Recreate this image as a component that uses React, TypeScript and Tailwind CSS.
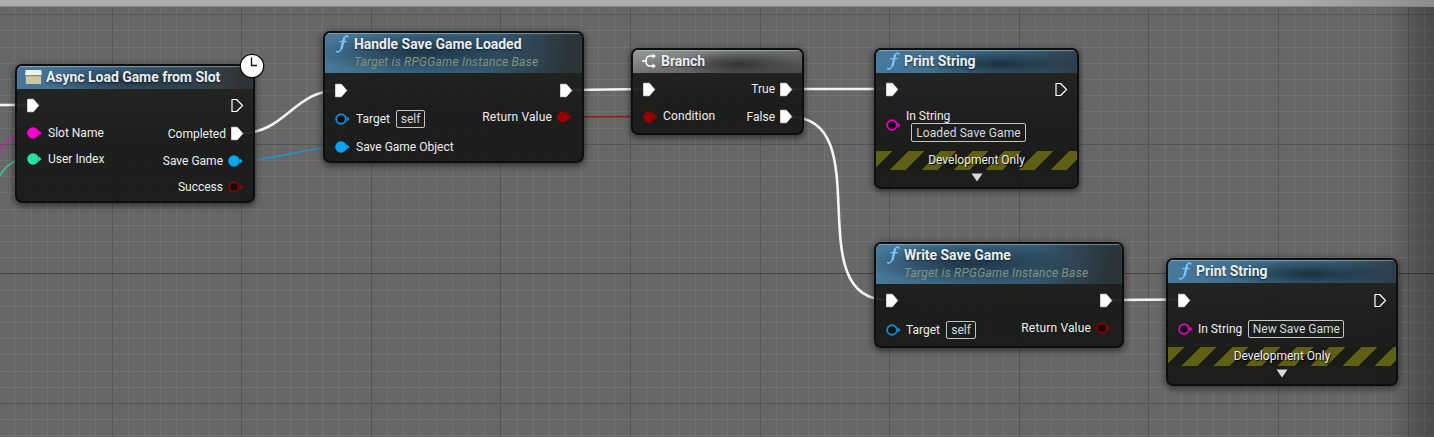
import type { ReactNode } from "react";

const XS = Array.from({ length: 90 }, (_, i) => i - 7);
const YS = Array.from({ length: 28 }, (_, i) => i - 17);

function Grid() {
  return (
    <svg className="absolute inset-0" width="1434" height="437" shapeRendering="crispEdges">
      {XS.filter((k) => k % 8 !== 0).map((k) => (
        <rect key={k} x={Math.floor(112.01 + 16.2 * k)} y="8" width="1" height="429" fill="#727272" />
      ))}
      {YS.filter((k) => k % 8 !== 0).map((k) => (
        <rect key={k} x="0" y={Math.floor(273.81 + 16.2 * k)} width="1434" height="1" fill="#727272" />
      ))}
      {XS.filter((k) => k % 8 === 0).map((k) => (
        <rect key={k} x={Math.floor(112.01 + 16.2 * k)} y="8" width="1" height="429" fill="#555555" />
      ))}
      {YS.filter((k) => k % 8 === 0).map((k) => (
        <rect key={k} x="0" y={Math.floor(273.81 + 16.2 * k)} width="1434" height="1" fill={k === 0 ? "#424242" : "#555555"} />
      ))}
    </svg>
  );
}

function Wires() {
  return (
    <svg className="absolute inset-0" width="1434" height="437" fill="none">
      <g stroke="#f4f4f4" strokeWidth="2.6">
        <path d="M0 105H30" />
        <path d="M240 133.500C286 133.500 293 90 340 90" />
        <path d="M570 90L646 89" />
        <path d="M790 89H888" />
        <path d="M790 117C880 117 797 300 888 300" />
        <path d="M1108 300L1182 299.500" />
      </g>
      <path d="M-13 171C3 143 10 133 32 133" stroke="#c02aa8" strokeWidth="1.800" />
      <path d="M-9 190C5 165 10 159 32 159" stroke="#3bbf96" strokeWidth="1.800" />
      <path d="M238 160.500C278 160.500 300 148 340 147" stroke="#2a8fc9" strokeWidth="1.700" />
      <path d="M566 117L648 116.500" stroke="#8f1c1c" strokeWidth="1.700" />
    </svg>
  );
}

function Exec({ hollow }: { hollow?: boolean }) {
  return (
    <svg width="14" height="15" viewBox="0 0 14 15" className="shrink-0">
      {hollow ? (
        <path d="M2 1.500H6.600L12.500 7.500L6.600 13.500H2Z" fill="none" stroke="#fff" strokeWidth="1.200" strokeLinejoin="round" />
      ) : (
        <path d="M1.500 1.200H7.400L12.800 7.500L7.400 13.800H1.500Z" fill="#fff" stroke="#fff" strokeWidth=".6" strokeLinejoin="round" />
      )}
    </svg>
  );
}

function Dot({ color, hollow }: { color: string; hollow?: boolean }) {
  return (
    <svg width="18" height="14" viewBox="0 0 18 14" className="shrink-0">
      <path d="M12.600 4.200L15.700 7L12.600 9.800Z" fill={color} />
      <circle cx="7" cy="7" r={hollow ? 4.8 : 5.8} fill={hollow ? "#0c0d0d" : color} stroke={hollow ? color : "none"} strokeWidth="1.900" />
    </svg>
  );
}

function FnIcon() {
  return (
    <svg width="16" height="20" viewBox="0 0 16 20" className="shrink-0" fill="none" stroke="#79c3f5" strokeLinecap="round">
      <path d="M14 3C12.900 1.300 10.600 1.900 9.700 5.200L7.700 13.500C6.800 17 4.700 18.700 2.600 17.500" strokeWidth="1.500" />
      <path d="M10 4.500L7.700 14" strokeWidth="2.400" />
      <path d="M5.800 7.600H12.300" strokeWidth="1.300" />
    </svg>
  );
}

function BranchIcon() {
  return (
    <svg width="16" height="16" viewBox="0 0 16 16" className="-ml-px shrink-0" fill="none" stroke="#fff" strokeWidth="1.500">
      <path d="M1 8H5M12 3H9C6.300 3 5 5.500 5 8S6.300 13 9 13H12" />
      <path d="M11.500 .6L15 3L11.500 5.400ZM11.500 10.600L15 13L11.500 15.400Z" fill="#fff" stroke="none" />
    </svg>
  );
}

function BoxIcon() {
  return (
    <svg width="18" height="16" viewBox="0 0 18 16" className="-ml-px shrink-0">
      <path d="M.700 1H16.300L16.800 6H0Z" fill="#f2f0e6" />
      <path d="M.800 6.500H16V15H.800Z" fill="#cfc7a4" />
      <path d="M.800 6H16V7.300H.800Z" fill="#8c876f" />
    </svg>
  );
}

function Node({ place, children }: { place: string; children: ReactNode }) {
  return (
    <section className={`absolute flex flex-col overflow-hidden rounded-[7px] border-2 border-[#0d0e0e] bg-[linear-gradient(180deg,rgba(32,34,32,0.93),rgba(22,24,22,0.93)_60%,rgba(24,26,24,0.95))] shadow-[0_2px_6px_1px_rgba(0,0,0,0.5)] ${place}`}>
      {children}
    </section>
  );
}

function Header({ icon, title, subtitle, gray, wide }: { icon: ReactNode; title: string; subtitle?: string; gray?: boolean; wide?: boolean }) {
  const tone = gray
    ? "bg-[radial-gradient(ellipse_38%_60%_at_62%_62%,rgba(40,40,40,0.8),transparent),linear-gradient(170deg,#9a9a9a,#6e6e6e_50%,#464646_100%)]"
    : subtitle
      ? "bg-[radial-gradient(ellipse_45%_50%_at_38%_50%,rgba(20,36,48,0.7),transparent),linear-gradient(99deg,#487a9c,#3b6582_30%,#345770_65%,#2a3439_94%)]"
      : wide
        ? "bg-[radial-gradient(ellipse_40%_60%_at_50%_62%,rgba(24,36,46,0.7),transparent),linear-gradient(99deg,#487a9c,#3c6480_35%,#364c5a_70%,#303335_95%)]"
        : "bg-[radial-gradient(ellipse_38%_60%_at_62%_62%,rgba(18,36,48,0.8),transparent),linear-gradient(99deg,#487a9c,#3f6d8b_35%,#385f78_70%,#2d3f4b_98%)]";
  return (
    <header className={`flex shrink-0 items-start pl-[9px] shadow-[inset_0_1px_1px_rgba(190,215,230,0.5)] ${subtitle ? "h-10" : "h-[23px]"} ${tone}`}>
      <div className={`flex h-[22px] items-center ${wide ? "w-5" : "w-[19px]"}`}>{icon}</div>
      <div className="flex flex-col">
        <h2 className="h-[22px] whitespace-nowrap text-[14px] leading-[22px] font-bold tracking-[-0.04px] text-[#e8eef2] [text-shadow:0_1px_2px_rgba(0,0,0,0.6)]">{title}</h2>
        {subtitle && <p className="h-[14px] whitespace-nowrap text-[12px] leading-[14px] tracking-[0.24px] text-[#82937f] italic">{subtitle}</p>}
      </div>
    </header>
  );
}

function Row({ h, left, right }: { h: string; left?: ReactNode; right?: ReactNode }) {
  return (
    <div className={`flex shrink-0 items-center justify-between ${h}`}>
      <div className="flex items-center">{left}</div>
      <div className="flex items-center">{right}</div>
    </div>
  );
}

function Field({ text, className = "h-[18px]" }: { text: string; className?: string }) {
  return <span className={`flex items-center justify-center rounded-[2px] border border-[#c4c4c4] text-[#d8d8d8] ${className}`}>{text}</span>;
}

function DevOnly() {
  return (
    <div className="flex flex-col items-center">
      <div className="flex h-[19px] w-full items-center justify-center bg-[repeating-linear-gradient(135deg,#606015_0,#606015_11.400px,#1b1c18_11.400px,#1b1c18_22.800px)] pb-px [text-shadow:1px_1px_1px_#000]">Development Only</div>
      <svg width="12" height="9" viewBox="0 0 12 9" className="mt-[3px]">
        <path d="M.5.500H11.500L6 8.500Z" fill="#d8d8d8" />
      </svg>
    </div>
  );
}

export default function App() {
  return (
    <main className="relative h-[437px] w-[1434px] overflow-hidden bg-[#676767] font-[Roboto,sans-serif] text-[12px] leading-4 whitespace-nowrap text-[#ededed]">
      <Grid />
      <div className="absolute inset-0 shadow-[inset_-45px_0_30px_-20px_rgba(0,0,0,0.28)]" />
      <div className="absolute inset-x-0 top-0 h-[7px] border-b border-[#858585] bg-linear-to-r from-[#adadad] from-90% to-[#8d8d8d]" />
      <Wires />

      <Node place="left-[15px] top-[64px] h-[139px] w-[240px]">
        <Header wide icon={<BoxIcon />} title="Async Load Game from Slot" />
        <div className="flex justify-between">
          <div className="flex flex-col pt-[2px] pl-[9px]">
            <Row h="h-7" left={<Exec />} />
            <Row h="h-7" left={<><Dot color="#ff00d0" /><span className="pl-[4px]">Slot Name</span></>} />
            <Row h="h-6" left={<><Dot color="#21e0a8" /><span className="pl-[4px]">User Index</span></>} />
          </div>
          <div className="flex flex-col pt-[2px] pr-[8px]">
            <Row h="h-7 pr-px" right={<Exec hollow />} />
            <Row h="h-[29px] pr-px" right={<><span className="pr-[4px]">Completed</span><Exec /></>} />
            <Row h="h-[25px]" right={<><span className="pr-[4px]">Save Game</span><Dot color="#00a5f5" /></>} />
            <Row h="h-7" right={<><span className="pr-[4px]">Success</span><Dot color="#8b0000" hollow /></>} />
          </div>
        </div>
      </Node>
      <svg className="absolute left-[238px] top-[52px]" width="28" height="28" viewBox="0 0 28 28">
        <circle cx="14" cy="14" r="11.700" fill="#fff" stroke="#111" strokeWidth="1.300" />
        <path d="M13.500 5.500V13.500H19" fill="none" stroke="#111" strokeWidth="1.300" />
      </svg>

      <Node place="left-[323px] top-[31px] h-[132px] w-[261px]">
        <Header wide icon={<FnIcon />} title="Handle Save Game Loaded" subtitle="Target is RPGGame Instance Base" />
        <div className="flex justify-between">
          <div className="flex flex-col pt-[3px] pl-[9px]">
            <Row h="h-7" left={<Exec />} />
            <Row h="h-[30px]" left={<><Dot color="#108ed2" hollow /><span className="pl-[4px]">Target</span><Field text="self" className="ml-[6px] h-[18px] w-[29px]" /></>} />
            <Row h="h-[26px]" left={<><Dot color="#00a5f5" /><span className="pl-[4px]">Save Game Object</span></>} />
          </div>
          <div className="flex flex-col pt-[3px] pr-[8px]">
            <Row h="h-7 pr-px" right={<Exec />} />
            <Row h="h-[26px]" right={<><span className="pr-[4px] tracking-[0.16px]">Return Value</span><Dot color="#960000" /></>} />
          </div>
        </div>
      </Node>

      <Node place="left-[631px] top-[48px] h-[87px] w-[173px]">
        <Header gray icon={<BranchIcon />} title="Branch" />
        <div className="flex flex-col px-[9px] pt-[2px]">
          <Row h="h-7" left={<Exec />} right={<><span className="pr-[4px]">True</span><Exec /></>} />
          <Row h="h-[27px]" left={<><Dot color="#960000" /><span className="pb-px pl-[3px] tracking-[0.12px]">Condition</span></>} right={<><span className="pr-[4px]">False</span><Exec /></>} />
        </div>
      </Node>

      <Node place="left-[874px] top-[48px] h-[141px] w-[205px]">
        <Header icon={<FnIcon />} title="Print String" />
        <div className="flex h-[78px] shrink-0 flex-col px-[9px] pt-[2px]">
          <Row h="h-7" left={<Exec />} right={<Exec hollow />} />
          <div className="flex h-11 items-center">
            <Dot color="#e000bd" hollow />
            <div className="flex flex-col pl-[3px]">
              <span className="h-[15px] leading-[17px]">In String</span>
              <Field text="Loaded Save Game" className="ml-[5px] h-[19px] w-[115px] tracking-[0.1px]" />
            </div>
          </div>
        </div>
        <DevOnly />
      </Node>

      <Node place="left-[874px] top-[242px] h-[106px] w-[250px]">
        <Header icon={<FnIcon />} title="Write Save Game" subtitle="Target is RPGGame Instance Base" />
        <div className="flex flex-col px-[9px] pt-[2px]">
          <Row h="h-7" left={<Exec />} right={<Exec />} />
          <Row h="h-[31px]" left={<><Dot color="#108ed2" hollow /><span className="pl-[3px]">Target</span><Field text="self" className="ml-[6px] h-[18px] w-[30px]" /></>} right={<div className="flex items-center pb-[3px]"><span className="pr-[4px] tracking-[0.16px]">Return Value</span><Dot color="#8b0000" hollow /></div>} />
        </div>
      </Node>

      <Node place="left-[1166px] top-[258px] h-[128px] w-[232px]">
        <Header icon={<FnIcon />} title="Print String" />
        <div className="flex h-16 shrink-0 flex-col px-[9px] pt-[3px]">
          <Row h="h-7" left={<Exec />} right={<Exec hollow />} />
          <Row h="h-[30px]" left={<><Dot color="#e000bd" hollow /><span className="pl-[3px]">In String</span><Field text="New Save Game" className="ml-[6px] h-[18px] w-[96px]" /></>} />
        </div>
        <DevOnly />
      </Node>
    </main>
  );
}
